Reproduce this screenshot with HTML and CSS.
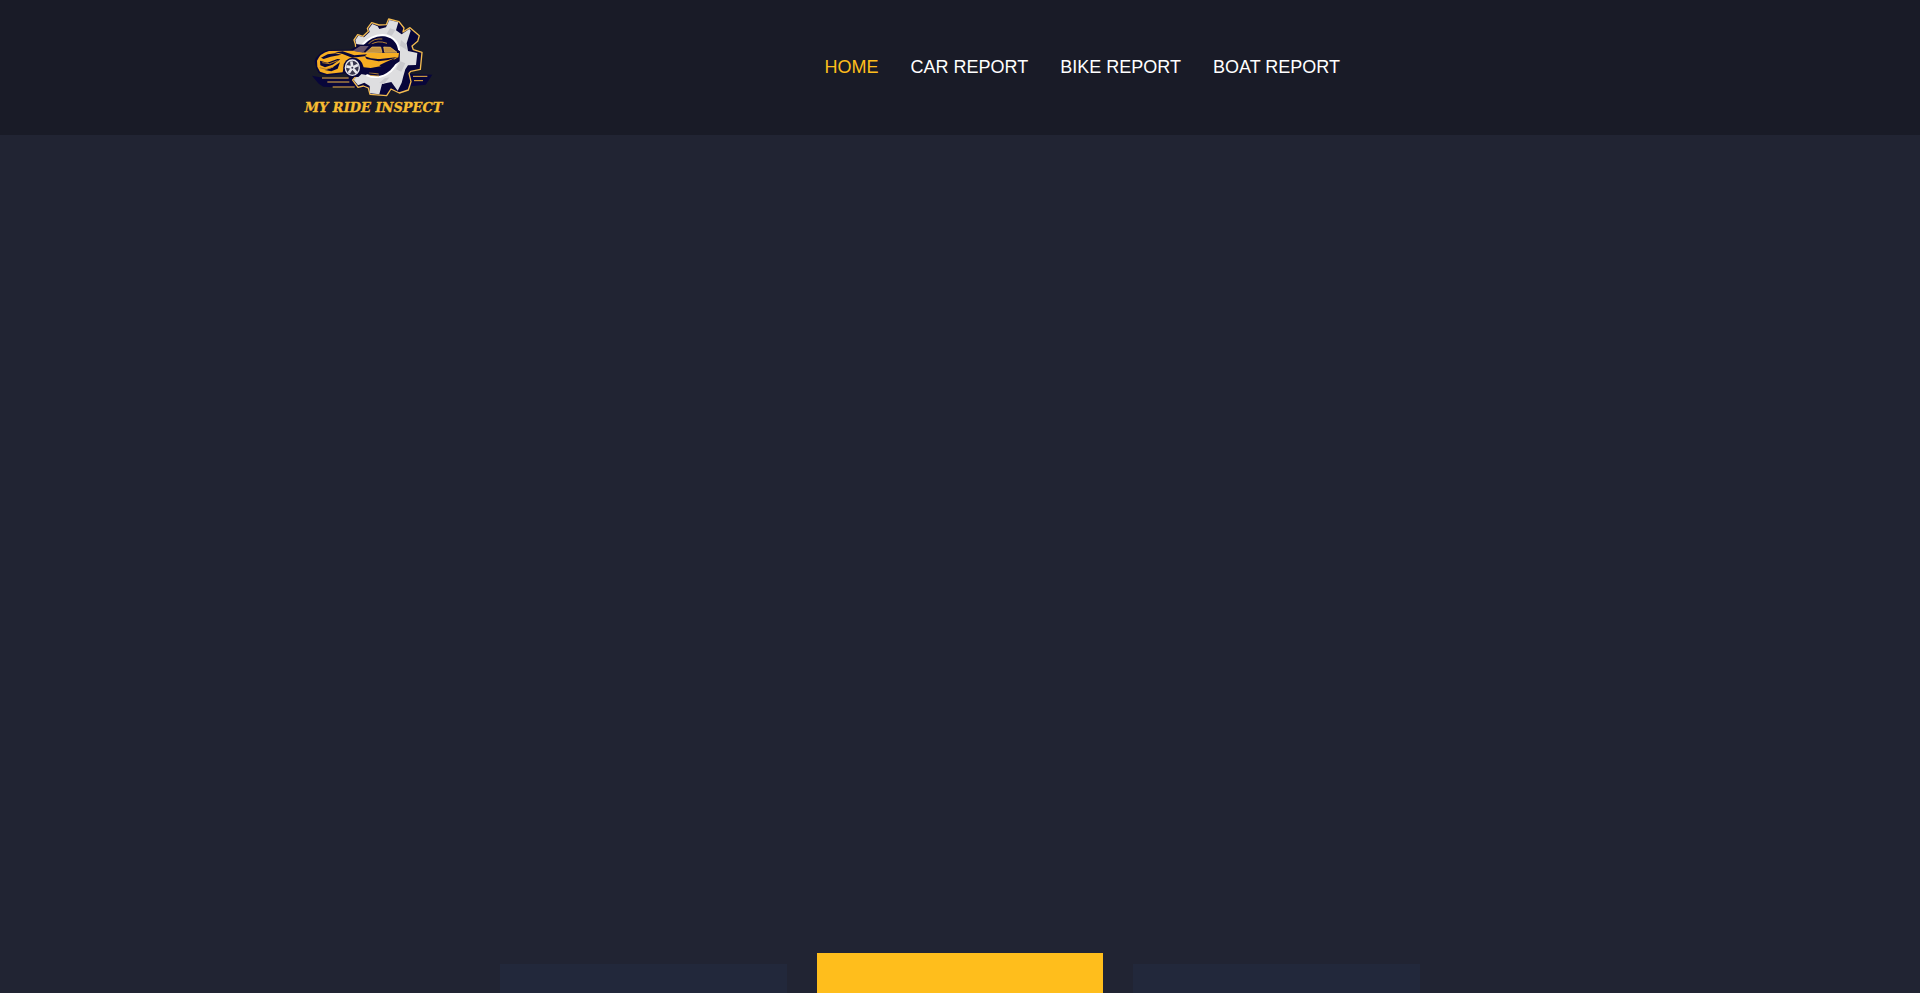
FILE: index.html
```
<!DOCTYPE html>
<html lang="en">
<head>
  <meta charset="UTF-8">
  <meta name="viewport" content="width=device-width, initial-scale=1.0">
  <title>My Ride Inspect</title>
  <link rel="stylesheet" href="styles.css">
</head>
<body>
  <!-- Header -->
  <header class="site-header">
    <div class="container header-inner">
      <a href="#" class="logo" aria-label="My Ride Inspect">
        <svg class="logo-image" viewBox="30 45 435 315" xmlns="http://www.w3.org/2000/svg">
          <!-- speed lines -->
          <path fill="#08063a" d="M66 227L90 232L200 232L240 265L200 264L100 260L86 251ZM350 222L427 224L407 254L345 260Z"/>
          <path fill="none" stroke="#f0b542" stroke-width="3" d="M96 234H176M112 246H178M128 261H194M369 229H412M372 242H399"/>

          <!-- gear -->
          <path fill="#08063a" stroke="#f2bb50" stroke-width="4" stroke-linejoin="round" d="M196 132L192 120L203 104L219 109L235 94L232 85L245 68L267 75L289 74L296 57L327 65L342 84L339 96L360 83L388 107L383 124L366 138L370 149L396 157L391 208L362 214L357 220L363 245L355 270L328 279L303 267L290 287L240 283L235 264L220 258L204 262L188 240L205 222Z"/>
          <path fill="#dedee0" fill-rule="evenodd" d="M199 132L196 120L205 107L222 112L239 96L236 86L247 72L263 79L268 87L288 82L298 60L325 67L318 91L335 103L358 87L362 92L350 130L354 153L382 159L378 195L354 196L346 208L340 229L335 248L323 272L304 246L276 252L268 283L240 280L239 258L223 248L204 256L191 239L209 221L229 225Q270 242 303 213Q332 185 327 147Q320 110 278 105Q242 105 218 135Z"/>
          <path fill="#c9c9cd" d="M300 85L316 90L305 107L290 101ZM333 120L348 133L351 150L330 137ZM331 184L346 190L334 215L318 208ZM284 235L299 232L281 252L268 249Z"/>
          <path fill="none" stroke="#fff" stroke-width="6" d="M218 134Q242 106 278 105Q320 110 327 147Q332 185 303 213Q270 242 229 225"/>
          <path fill="#08063a" d="M227 137Q244 112 278 110Q316 116 322 150Q325 184 298 207Q267 232 230 220Z"/>
          <path fill="none" stroke="#d59a32" stroke-width="2.5" d="M235 132Q251 114 277 117M241 135Q262 119 291 130M237 218L266 222M239 226L267 228"/>

          <!-- car -->
          <path fill="#08063a" d="M74 184Q80 160 112 150L181 149L207 135L247 132L305 136L330 154L329 184L300 204L268 216L218 219L205 231L176 230L166 220L112 227L86 219L79 205Z"/>
          <path fill="#f7ae22" d="M81 182Q90 160 117 153L188 152L230 158L327 159L325 172L304 183L279 197L242 204L221 202Q216 175 190 173Q164 174 158 217L111 222L90 215L82 200Z"/>
          <path fill="#655369" d="M188 152L211 138L236 138L219 158Z"/>
          <path fill="#c69340" stroke="#f6c560" stroke-width="2" d="M227 158L246 141L272 141L276 157ZM281 141L301 142L321 157L284 157Z"/>
          <path fill="#08063a" d="M135 157L158 154L193 166L231 163L224 169L186 173L158 162ZM93 173L113 163L136 160L154 164L122 170L101 177ZM90 182L112 188L142 177L151 178L128 194L105 202L91 196ZM104 210L126 203L150 187L143 206L124 214ZM224 169Q247 179 277 176L324 171L294 180L266 184L230 177ZM268 196L288 186L315 174L302 190L279 203Z"/>
          <path fill="none" stroke="#b27b25" stroke-width="3" d="M97 188L119 191L143 182M89 203L109 208L130 201"/>

          <!-- front wheel -->
          <ellipse cx="188" cy="202" rx="28" ry="29" fill="#08063a"/>
          <ellipse cx="187" cy="203" rx="21" ry="23" fill="#39374f" stroke="#e8e7ec" stroke-width="4"/>
          <path fill="none" stroke="#e8e7ec" stroke-width="8" d="M187 203L184 184M187 203L204 195M187 203L200 219M187 203L176 219M187 203L169 199"/>
          <circle cx="187" cy="203" r="3" fill="#39374f"/>
          <text class="logo-text" x="44" y="336">MY RIDE INSPECT</text>
        </svg>
      </a>

      <nav class="main-nav">
        <ul class="nav-list">
          <li><a href="#" class="active">HOME</a></li>
          <li><a href="#">CAR REPORT</a></li>
          <li><a href="#">BIKE REPORT</a></li>
          <li><a href="#">BOAT REPORT</a></li>
        </ul>
      </nav>
    </div>
  </header>

  <!-- Main Content -->
  <main>
    <section class="hero"></section>

    <!-- Pricing cards -->
    <section class="pricing">
      <div class="card"></div>
      <div class="card featured"></div>
      <div class="card"></div>
    </section>
  </main>
</body>
</html>
```

FILE: styles.css
```
/* Reset and base styles */
* {
  margin: 0;
  padding: 0;
  box-sizing: border-box;
}

body {
  background-color: #212433;
  color: #fff;
  font-family: "Liberation Sans", Arial, sans-serif;
  font-size: 18px;
  line-height: 24px;
}

a {
  color: inherit;
  text-decoration: none;
}

.container {
  width: 100%;
  max-width: 1320px;
  margin: 0 auto;
}

/* Header styles */
.site-header {
  background-color: #191b27;
  padding: 15px 0;
}

.header-inner {
  display: flex;
  align-items: center;
  justify-content: space-between;
}

.logo-image {
  display: block;
  width: 145px;
  height: 105px;
}

.logo-text {
  font-family: "DejaVu Serif", serif;
  font-size: 39px;
  font-weight: 700;
  font-style: italic;
  fill: #f8bd32;
  stroke: #f8bd32;
  stroke-width: 1px;
}

.main-nav {
  padding: 0 280px 2px 0;
}

.nav-list {
  display: flex;
  gap: 32px;
  list-style: none;
}

.nav-list a:hover,
.nav-list .active {
  color: #ffbe1c;
}

/* Main content styles */
.hero {
  height: 818px;
}

.pricing {
  display: grid;
  grid-template-columns: repeat(3, 1fr);
  gap: 30px;
  max-width: 920px;
  margin: 0 auto;
}

.card {
  height: 29px;
  margin-top: 11px;
  background-color: #22283b;
}

.featured {
  height: 40px;
  margin-top: 0;
  background-color: #ffbe1c;
}
```
